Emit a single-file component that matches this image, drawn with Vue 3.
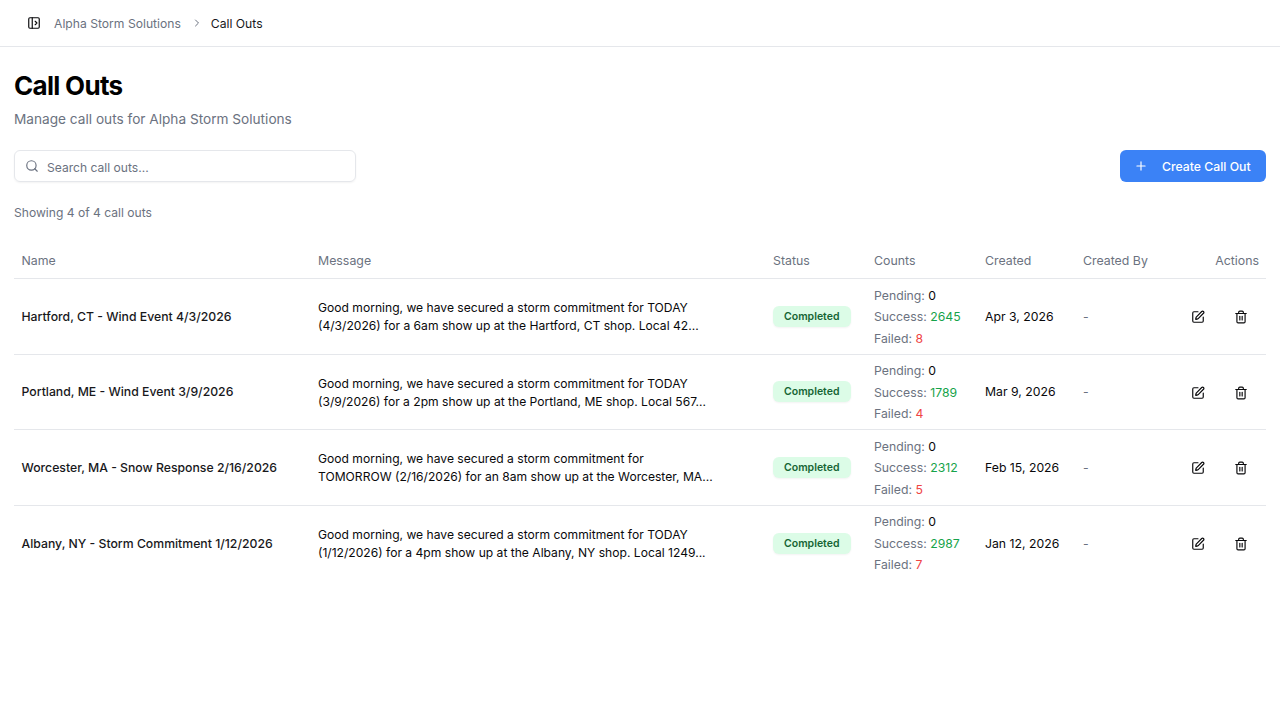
<template>
  <div class="page">
    <header class="topbar">
      <svg class="panel-icon" viewBox="0 0 24 24" width="14" height="14">
        <rect x="3" y="3" width="18" height="18" rx="2" />
        <path d="M9 3v18" />
        <path d="m14 9 3 3-3 3" />
      </svg>
      <span class="crumb">Alpha Storm Solutions</span>
      <svg class="crumb-sep" viewBox="0 0 24 24" width="12" height="12">
        <path d="m9 18 6-6-6-6" />
      </svg>
      <span class="crumb-current">Call Outs</span>
    </header>

    <main class="content">
      <h1>Call Outs</h1>
      <p class="subtitle">Manage call outs for Alpha Storm Solutions</p>

      <div class="toolbar">
        <div class="search">
          <svg viewBox="0 0 24 24" width="14" height="14">
            <circle cx="11" cy="11" r="8" />
            <path d="m21 21-4.3-4.3" />
          </svg>
          <span class="search-text">Search call outs...</span>
        </div>
        <button class="btn-create">
          <svg viewBox="0 0 24 24" width="14" height="14">
            <path d="M5 12h14" />
            <path d="M12 5v14" />
          </svg>
          Create Call Out
        </button>
      </div>

      <div class="showing">Showing 4 of 4 call outs</div>

      <table>
        <colgroup>
          <col style="width: 297px" />
          <col style="width: 455px" />
          <col style="width: 101px" />
          <col style="width: 111px" />
          <col style="width: 98px" />
          <col style="width: 90px" />
          <col />
        </colgroup>
        <thead>
          <tr>
            <th>Name</th>
            <th>Message</th>
            <th>Status</th>
            <th>Counts</th>
            <th>Created</th>
            <th>Created By</th>
            <th class="right">Actions</th>
          </tr>
        </thead>
        <tbody>
          <tr v-for="row in rows" :key="row.name">
            <td class="name">{{ row.name }}</td>
            <td class="message">{{ row.line1 }}<br />{{ row.line2 }}</td>
            <td><span class="badge">Completed</span></td>
            <td class="counts">
              <div>Pending: <b>0</b></div>
              <div>Success: <b class="ok">{{ row.success }}</b></div>
              <div>Failed: <b class="bad">{{ row.failed }}</b></div>
            </td>
            <td class="date">{{ row.created }}</td>
            <td class="by">-</td>
            <td class="action-cell">
              <div class="actions">
                <button>
                  <svg viewBox="0 0 24 24" width="14" height="14">
                    <path d="M12 3H5a2 2 0 0 0-2 2v14a2 2 0 0 0 2 2h14a2 2 0 0 0 2-2v-7" />
                    <path d="M18.375 2.625a1 1 0 0 1 3 3l-9.013 9.014a2 2 0 0 1-.853.505l-2.873.84a.5.5 0 0 1-.62-.62l.84-2.873a2 2 0 0 1 .506-.852z" />
                  </svg>
                </button>
                <button>
                  <svg viewBox="0 0 24 24" width="14" height="14">
                    <path d="M3 6h18" />
                    <path d="M19 6v14a2 2 0 0 1-2 2H7a2 2 0 0 1-2-2V6" />
                    <path d="M8 6V4a2 2 0 0 1 2-2h4a2 2 0 0 1 2 2v2" />
                    <path d="M10 11v6" />
                    <path d="M14 11v6" />
                  </svg>
                </button>
              </div>
            </td>
          </tr>
        </tbody>
      </table>
    </main>
  </div>
</template>

<script setup>
const rows = [
  {
    name: "Hartford, CT - Wind Event 4/3/2026",
    line1: "Good morning, we have secured a storm commitment for TODAY",
    line2: "(4/3/2026) for a 6am show up at the Hartford, CT shop. Local 42...",
    success: 2645,
    failed: 8,
    created: "Apr 3, 2026",
  },
  {
    name: "Portland, ME - Wind Event 3/9/2026",
    line1: "Good morning, we have secured a storm commitment for TODAY",
    line2: "(3/9/2026) for a 2pm show up at the Portland, ME shop. Local 567...",
    success: 1789,
    failed: 4,
    created: "Mar 9, 2026",
  },
  {
    name: "Worcester, MA - Snow Response 2/16/2026",
    line1: "Good morning, we have secured a storm commitment for",
    line2: "TOMORROW (2/16/2026) for an 8am show up at the Worcester, MA...",
    success: 2312,
    failed: 5,
    created: "Feb 15, 2026",
  },
  {
    name: "Albany, NY - Storm Commitment 1/12/2026",
    line1: "Good morning, we have secured a storm commitment for TODAY",
    line2: "(1/12/2026) for a 4pm show up at the Albany, NY shop. Local 1249...",
    success: 2987,
    failed: 7,
    created: "Jan 12, 2026",
  },
]
</script>

<style>
html,
body {
  margin: 0;
  background: #fff;
}
</style>

<style scoped>
.page {
  font-family: Inter, "Liberation Sans", sans-serif;
  color: #09090b;
  font-size: 12.25px;
  min-height: 720px;
}
svg {
  fill: none;
  stroke: currentColor;
  stroke-width: 2;
  stroke-linecap: round;
  stroke-linejoin: round;
  flex: none;
}
.topbar {
  height: 46px;
  border-bottom: 1px solid #e5e7eb;
  display: flex;
  align-items: center;
  padding-left: 27px;
  font-size: 12.15px;
}
.panel-icon {
  color: #09090b;
  margin-right: 13px;
}
.crumb {
  color: #6b7280;
}
.crumb-sep {
  color: #6b7280;
  margin: 0 8px 0 10px;
}
.crumb-current {
  color: #18181b;
}
.content {
  padding: 0 14px;
}
h1 {
  margin: 0;
  padding-top: 22px;
  font-size: 26px;
  line-height: 34px;
  font-weight: 700;
  letter-spacing: -0.7px;
  color: #000;
}
.subtitle {
  margin: 6px 0 0;
  font-size: 13.65px;
  line-height: 20px;
  color: #6b7280;
}
.toolbar {
  margin-top: 21px;
  display: flex;
  justify-content: space-between;
  align-items: center;
}
.search {
  box-sizing: border-box;
  width: 342px;
  height: 32px;
  border: 1px solid #e5e7eb;
  border-radius: 6px;
  box-shadow: 0 1px 2px rgba(0, 0, 0, 0.05);
  display: flex;
  align-items: center;
  gap: 8px;
  padding-left: 10px;
  color: #6b7280;
}
.search-text {
  font-size: 12.1px;
  padding-top: 2px;
}
.btn-create {
  box-sizing: border-box;
  width: 146px;
  height: 32px;
  padding: 0 14px;
  background: #3b82f6;
  color: #fff;
  border: none;
  border-radius: 6px;
  font: inherit;
  font-weight: 500;
  display: flex;
  align-items: center;
  gap: 14px;
}
.showing {
  margin-top: 23px;
  font-size: 12.1px;
  line-height: 16px;
  color: #6b7280;
}
table {
  margin-top: 17px;
  width: 100%;
  table-layout: fixed;
  border-collapse: collapse;
}
th {
  height: 36px;
  padding: 4px 7px 0;
  text-align: left;
  font-size: 12.35px;
  font-weight: 400;
  color: #6b7280;
  border-bottom: 1px solid #e5e7eb;
}
th:first-child,
td.name {
  padding-left: 7.5px;
}
th.right {
  text-align: right;
}
td {
  height: 75.5px;
  padding: 0 7px;
  border-bottom: 1px solid #e5e7eb;
  box-sizing: border-box;
}
tbody tr:last-child td {
  border-bottom: none;
}
.name {
  font-weight: 500;
  color: #18181b;
}
.message {
  font-size: 12.1px;
  line-height: 18px;
  white-space: nowrap;
  padding-top: 2px;
}
.badge {
  display: inline-block;
  background: #dcfce7;
  color: #166534;
  font-size: 10.5px;
  font-weight: 600;
  line-height: 21px;
  padding: 0 12px 0 11px;
  border-radius: 6px;
  box-shadow: 0 1px 2px rgba(0, 0, 0, 0.05);
}
.counts {
  color: #6b7280;
  line-height: 21.5px;
  padding-top: 1px;
}
.counts b {
  font-weight: 400;
  color: #09090b;
}
.counts b.ok {
  color: #16a34a;
}
.counts b.bad {
  color: #ef4444;
}
.by {
  color: #6b7280;
}
.action-cell {
  padding-top: 2px;
}
.actions {
  display: flex;
  justify-content: flex-end;
  gap: 11px;
  padding-right: 2px;
}
.actions button {
  width: 32px;
  height: 32px;
  padding: 0;
  border: none;
  background: none;
  color: #09090b;
  display: flex;
  align-items: center;
  justify-content: center;
}
</style>
